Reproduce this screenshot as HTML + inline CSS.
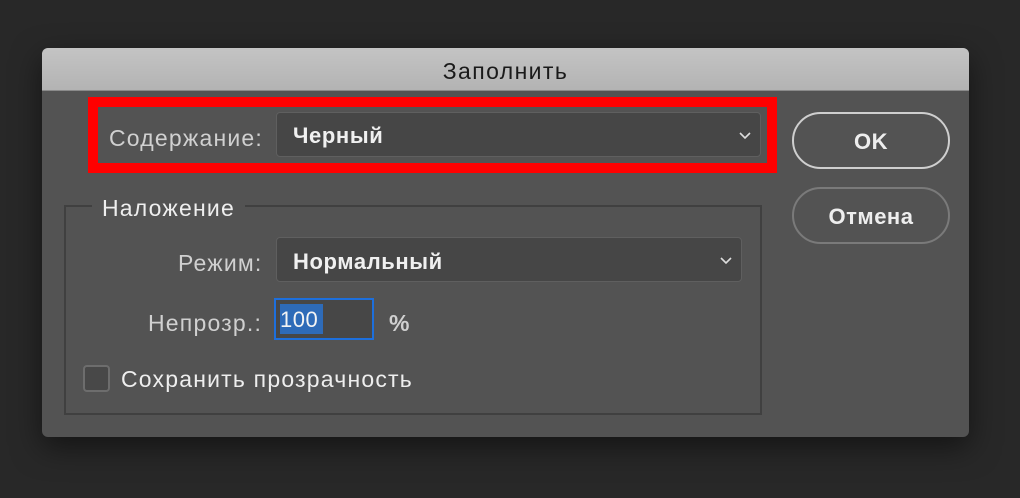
<!DOCTYPE html>
<html><head><meta charset="utf-8"><style>
*{margin:0;padding:0;box-sizing:border-box}
body{width:1020px;height:498px;background:#282828;position:relative;overflow:hidden;font-family:"Liberation Sans","DejaVu Sans",sans-serif;color:#e6e6e6}
.a{position:absolute;white-space:nowrap}
.dlg{left:42px;top:48px;width:927px;height:389px;background:#535353;border-radius:6px;overflow:hidden;box-shadow:0 10px 30px rgba(0,0,0,.5)}
.title{left:0;top:0;width:927px;height:43px;background:linear-gradient(#c4c4c4,#b3b3b3);color:#1a1a1a;font-size:23px;letter-spacing:1.4px;text-align:center;line-height:46px;border-bottom:1px solid #8a8a8a}
.red{left:88px;top:97px;width:689px;height:76px;border:10px solid #ff0000}
.dd{background:#464646;border:1px solid #5f5f5f;border-radius:4px;color:#f0f0f0;font-size:22px;font-weight:bold;letter-spacing:0.6px;padding-left:16px}
.lbl{font-size:23px;letter-spacing:1.2px;color:#d0d0d0}
.btn{border:2px solid #cfcfcf;border-radius:29px;text-align:center;font-size:22px;font-weight:bold;letter-spacing:0.5px;color:#eee}
</style></head><body>
<div class="a dlg"></div>
<div class="a dlg" style="background:transparent;box-shadow:none">
<div class="a title">Заполнить</div>
</div>
<div class="a red"></div>
<div class="a lbl" style="left:109px;top:125px">Содержание:</div>
<div class="a dd" style="left:276px;top:112px;width:485px;height:45px;line-height:45px">Черный
<svg class="a" style="right:8px;top:18px" width="14" height="9"><path d="M2 2l5 5 5-5" stroke="#ddd" stroke-width="1.6" fill="none"/></svg></div>
<div class="a btn" style="left:792px;top:112px;width:158px;height:57px;line-height:56px">OK</div>
<div class="a btn" style="left:792px;top:187px;width:158px;height:57px;line-height:56px;border-color:#7a7a7a">Отмена</div>
<div class="a" style="left:64px;top:205px;width:698px;height:210px;border:2px solid #404040"></div>
<div class="a lbl" style="left:92px;top:195px;background:#535353;padding:0 10px;color:#eee">Наложение</div>
<div class="a lbl" style="left:178px;top:250px">Режим:</div>
<div class="a dd" style="left:276px;top:237px;width:466px;height:45px;line-height:47px">Нормальный
<svg class="a" style="right:8px;top:18px" width="14" height="9"><path d="M2 2l5 5 5-5" stroke="#ddd" stroke-width="1.6" fill="none"/></svg></div>
<div class="a lbl" style="left:148px;top:310px">Непрозр.:</div>
<div class="a" style="left:274px;top:298px;width:100px;height:42px;border:2px solid #1d6fdc;background:#474747"></div>
<div class="a" style="left:280px;top:304px;width:43px;height:30px;background:#2e6bb8;color:#f4f4f4;font-size:22px;letter-spacing:0.5px;line-height:32px">100</div>
<div class="a lbl" style="left:389px;top:310px;font-weight:bold">%</div>
<div class="a" style="left:83px;top:365px;width:27px;height:27px;border:2px solid #6d6d6d;border-radius:4px;background:#484848"></div>
<div class="a lbl" style="left:121px;top:366px;color:#eee">Сохранить прозрачность</div>
</body></html>
